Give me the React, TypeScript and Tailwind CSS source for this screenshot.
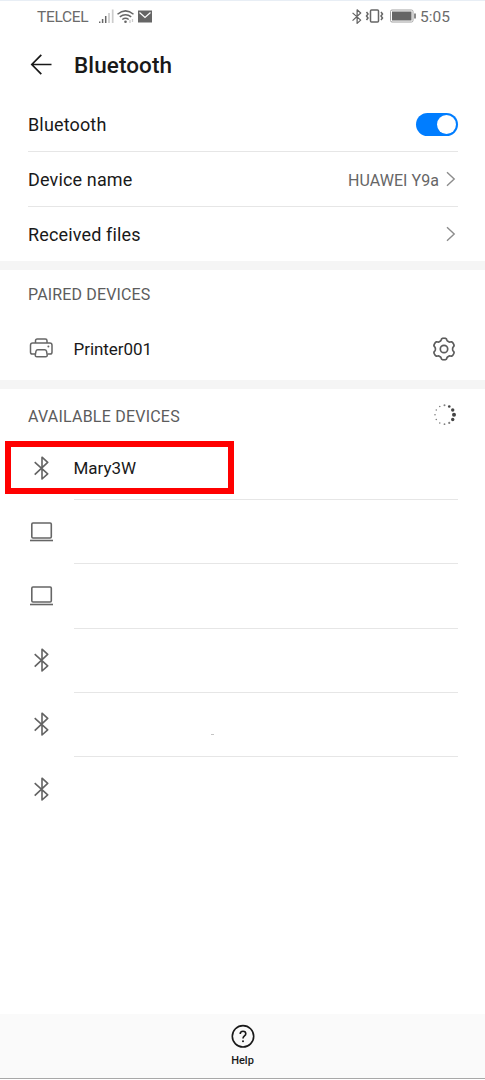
import type { ReactNode } from "react";

function BluetoothIcon({ className = "w-6 h-6" }: { className?: string }) {
  return (
    <svg viewBox="0 0 24 24" className={className} fill="none" stroke="#636363" strokeWidth="1.6" strokeLinejoin="round">
      <path d="M5.7 6.2 18.7 17.8 13 23V1.2L18.7 6.4 5.7 18.6" />
    </svg>
  );
}

function LaptopIcon() {
  return (
    <svg viewBox="0 0 24 24" className="w-6 h-6" fill="none" stroke="#666666" strokeWidth="1.6">
      <rect x="2.800" y="3" width="19.500" height="15" rx="1.2" />
      <path d="M1 20.500h23" />
    </svg>
  );
}

function PrinterIcon() {
  return (
    <svg viewBox="0 0 24 24" className="w-6 h-6" fill="none" stroke="#666666" strokeWidth="1.5">
      <path d="M6.500 6V3.700Q6.500 2 8.200 2h8.100q1.700 0 1.700 1.700V6" />
      <path d="M6 17H3.400Q1.500 17 1.500 15.200V8.200Q1.500 6 3.700 6h17.100q2.200 0 2.200 2.200v7q0 1.800-1.900 1.800H18.500" />
      <path d="M8.700 12.700h7q1.400 0 1.800 1.400l.7 3.800q.2 1.900-1.600 1.900H7.900q-1.800 0-1.600-1.900l.7-3.800q.4-1.400 1.700-1.400z" />
      <circle cx="19.400" cy="9.500" r="1" fill="#666666" stroke="none" />
    </svg>
  );
}

// six rounded teeth, one of them pointing straight up
const gearPoints = Array.from({ length: 120 }, (_, i) => {
  const a = (i * 3 * Math.PI) / 180;
  const r = 9.7 + 1.1 * Math.tanh(2.2 * Math.cos(6 * a) + 0.4);
  return `${(12 + r * Math.sin(a)).toFixed(2)},${(12 - r * Math.cos(a)).toFixed(2)}`;
}).join(" ");

function GearIcon() {
  return (
    <svg viewBox="0 0 24 24" className="w-6 h-6" fill="none" stroke="#5c5c5c" strokeWidth="1.7" strokeLinejoin="round">
      <polygon points={gearPoints} />
      <circle cx="12" cy="12" r="3.700" />
    </svg>
  );
}

const dotSizes = [1, 1.3, 1.7, 2, 1.7, 1.1, 0.9, 0.8, 0.8, 0.8, 0.8, 0.8];

function Spinner() {
  return (
    <svg viewBox="0 0 24 24" className="w-6 h-6">
      {dotSizes.map((size, i) => (
        <circle
          key={i}
          cx={11.5 + 9.5 * Math.sin((i * Math.PI) / 6)}
          cy={11.7 - 9.5 * Math.cos((i * Math.PI) / 6)}
          r={size}
          fill={size > 1.2 ? "#444444" : "#808080"}
        />
      ))}
    </svg>
  );
}

function Chevron() {
  return (
    <svg viewBox="0 0 10 16" className="w-[10px] h-4" fill="none" stroke="#8c8c8c" strokeWidth="1.4">
      <path d="M1 1.200 8.200 8 1 14.800" />
    </svg>
  );
}

function StatusBar() {
  return (
    <div className="h-[31px] pl-[37px] pr-[35px] flex items-center justify-between text-[#6b6b6b] border-t border-[#e8eef5]">
      <div className="flex items-center">
        <span className="w-[62px] pt-[3px] text-[15.500px] tracking-[-0.300px]">TELCEL</span>
        <svg viewBox="0 0 55 16" className="w-[55px] h-4" fill="none">
          <path d="M.7 13.500v1.500M3.600 11v4M6.700 8v7" stroke="#666666" strokeWidth="1.500" />
          <path d="M10 5v10M13.700 1.500V15" stroke="#cccccc" strokeWidth="1.700" />
          <path d="M18.500 6.200Q26.500-.5 34.500 6.200M20.800 8.900q5.700-4.500 11.400 0M23.300 11.500q3.200-2.300 6.400 0" stroke="#666666" strokeWidth="1.500" />
          <circle cx="26.500" cy="13.800" r="1.300" fill="#666666" />
          <path d="M31 12v3M33.500 11v3" stroke="#cccccc" strokeWidth="1.300" />
          <rect x="39" y="2.500" width="14" height="12" fill="#666666" />
          <path d="m40.500 4.500 5.500 5 5.500-5" stroke="#ffffff" strokeWidth="1.200" />
        </svg>
      </div>
      <div className="flex items-center">
        <BluetoothIcon className="w-[15px] h-[15px] stroke-2" />
        <svg viewBox="0 0 20 16" className="w-5 h-4 mr-[5px]" fill="none" stroke="#666666" strokeWidth="1.500">
          <rect x="6.500" y="2" width="8" height="12" rx="1" />
          <path d="m2.500 4 1.500 2-1.500 2L4 10l-1.500 2M17 4l1.500 2L17 8l1.500 2-1.500 2" />
        </svg>
        <svg viewBox="0 0 27 14" className="w-[27px] h-[14px] mr-[4px]">
          <rect x="1.500" y="1" width="22.500" height="12" rx="1.500" fill="none" stroke="#a0a0a0" />
          <rect x="3" y="2.500" width="19.500" height="9" fill="#666666" />
          <path d="M26 4.500v5" stroke="#666666" strokeWidth="1.500" />
        </svg>
        <span className="pt-[3px] text-[15.500px]">5:05</span>
      </div>
    </div>
  );
}

function SettingRow({ label, children, last }: { label: string; children: ReactNode; last?: boolean }) {
  return (
    <div className={`ml-7 mr-[27px] flex items-center justify-between ${last ? "h-[54px]" : "h-[55px] border-b border-[#e6e6e6]"}`}>
      <span className="pt-px text-[18px] tracking-[0.150px]">{label}</span>
      {children}
    </div>
  );
}

const devices = [
  { kind: "laptop" },
  { kind: "laptop" },
  { kind: "bluetooth" },
  { kind: "bluetooth", dash: true },
  { kind: "bluetooth" },
];

export default function App() {
  return (
    <main className="w-[485px] h-[1080px] flex flex-col bg-white text-[#191919] font-[Roboto,sans-serif] overflow-hidden">
      <StatusBar />

      <header className="h-[66px] pl-[30px] flex items-center gap-[22px]">
        <svg viewBox="0 0 22 22" className="w-[22px] h-[22px]" fill="none" stroke="#191919" strokeWidth="1.700">
          <path d="M21.500 11.500H2M11.300 1.800 1.800 11.500l9.500 9.700" />
        </svg>
        <h1 className="text-[22.500px] tracking-[0.100px] font-medium pt-[4px]">Bluetooth</h1>
      </header>

      <section className="shrink-0">
        <SettingRow label="Bluetooth">
          <div className="w-[42px] h-[23px] p-[2px] rounded-full bg-[#007dff] flex justify-end">
            <div className="w-[19px] h-[19px] rounded-full bg-white" />
          </div>
        </SettingRow>
        <SettingRow label="Device name">
          <div className="flex items-center gap-[7px] pr-[2px]">
            <span className="pt-[3px] text-base tracking-[0.050px] text-[#666666]">HUAWEI Y9a</span>
            <Chevron />
          </div>
        </SettingRow>
        <SettingRow label="Received files" last>
          <div className="pr-[2px]">
            <Chevron />
          </div>
        </SettingRow>
      </section>

      <section className="shrink-0 border-t-[9px] border-[#f5f5f5] h-[119px]">
        <h2 className="h-[50px] pl-7 flex items-center text-base tracking-[0.150px] text-[#5c5c5c]">PAIRED DEVICES</h2>
        <div className="h-[58px] pl-[29px] pr-[29px] flex items-center">
          <PrinterIcon />
          <span className="ml-[20.500px] pt-[2px] flex-1 text-[17px] tracking-[-0.050px]">Printer001</span>
          <GearIcon />
        </div>
      </section>

      <section className="flex-1 border-t-[9px] border-[#f5f5f5]">
        <div className="h-[52px] pl-7 pr-[28px] flex items-center justify-between">
          <h2 className="pt-[3px] text-base tracking-[0.220px] text-[#5c5c5c]">AVAILABLE DEVICES</h2>
          <Spinner />
        </div>
        <div className="relative h-[59px] pl-[29px] flex">
          <div className="h-[53px] flex items-center">
            <BluetoothIcon />
          </div>
          <div className="ml-[20.500px] mr-[27px] flex-1 border-b border-[#e6e6e6]">
            <span className="h-[55px] flex items-center text-[17px]">Mary3W</span>
          </div>
          <div className="absolute left-[5px] top-0 w-[229px] h-[53px] border-[6px] border-[#ff0000]" />
        </div>
        {devices.map((device, i) => (
          <div key={i} className="h-[64.250px] pl-[29px] pr-[27px] flex gap-[20.500px]">
            <div className="h-[63px] flex items-center">
              {device.kind === "laptop" ? <LaptopIcon /> : <BluetoothIcon />}
            </div>
            <div className={`flex-1 flex items-center ${i < devices.length - 1 ? "border-b border-[#e6e6e6]" : ""}`}>
              {device.dash && <span className="ml-[137.500px] mt-[21px] w-[3px] h-px bg-[#c4c4c4]" />}
            </div>
          </div>
        ))}
      </section>

      <footer className="shrink-0 h-[65px] mb-px bg-[#fafafa] border-b border-[#a8a8a8] flex flex-col items-center pt-[10px]">
        <svg viewBox="0 0 24 24" className="w-6 h-6" fill="none" stroke="#191919" strokeWidth="1.600">
          <circle cx="12" cy="12.300" r="10.700" />
          <path d="M9.200 10Q9.200 7.200 12 7.200t2.800 2.600c0 2.100-2.800 2.200-2.800 4.600" />
          <circle cx="12" cy="17.200" r="1" fill="#191919" stroke="none" />
        </svg>
        <span className="mt-[5px] text-[11px] leading-4 font-medium">Help</span>
      </footer>
    </main>
  );
}
